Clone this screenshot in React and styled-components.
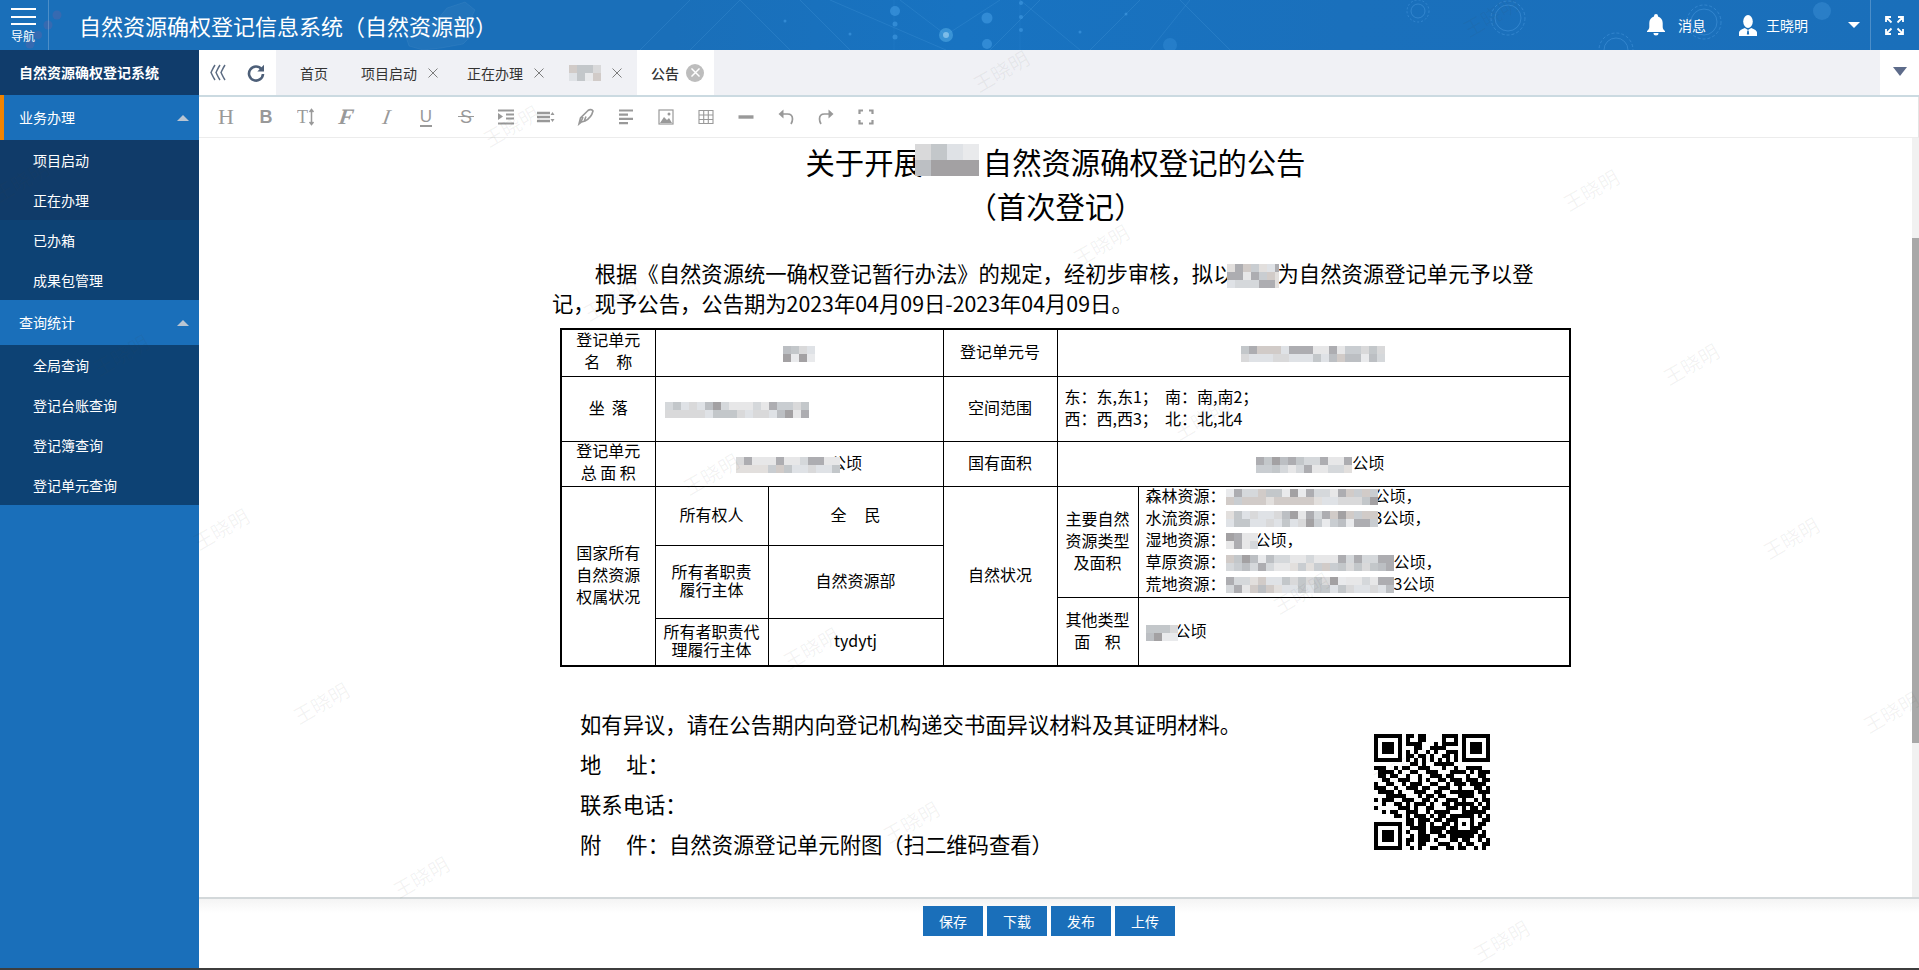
import React from "react";
import styled, { createGlobalStyle } from "styled-components";

const FONT = `"Noto Sans CJK SC", "Noto Sans", sans-serif`;

const Global = createGlobalStyle`
  html, body { margin: 0; padding: 0; background: #fff; }
  body { font-family: ${FONT}; overflow: hidden; }
  * { box-sizing: border-box; }
`;

const Shell = styled.div`
  position: relative;
  width: 1919px;
  height: 970px;
  display: flex;
  flex-direction: column;
  overflow: hidden;
  border-bottom: 2px solid #3d3d3d;
`;

/* ---------- header ---------- */
const Header = styled.header`
  position: relative;
  flex: 0 0 50px;
  display: flex;
  align-items: center;
  color: #fff;
  background: linear-gradient(90deg, #1a6fb9 0%, #1a6fb9 35%, #1873c1 50%, #1a70bc 70%, #1a6fba 100%);
  overflow: hidden;
`;
const HeaderArt = styled.svg`
  position: absolute;
  left: 0;
  top: 0;
`;
const NavButton = styled.div`
  position: relative;
  flex: 0 0 49px;
  height: 50px;
  padding: 8px 0 0 11px;
  border-right: 1px solid rgba(255, 255, 255, 0.22);
`;
const NavBars = styled.div`
  width: 25px;
  height: 17px;
  border-top: 2px solid #fff;
  border-bottom: 2px solid #fff;
  display: flex;
  align-items: center;
  &::before { content: ""; display: block; width: 100%; height: 2px; background: #fff; }
`;
const NavLabel = styled.div`
  font-size: 12px;
  line-height: 14px;
  margin-top: 4px;
  white-space: nowrap;
`;
const AppTitle = styled.h1`
  position: relative;
  margin: 0 0 0 30px;
  font-size: 22px;
  font-weight: 400;
  line-height: 50px;
  white-space: nowrap;
`;
const HeaderRight = styled.div`
  position: relative;
  margin-left: auto;
  height: 50px;
  display: flex;
  align-items: center;
  font-size: 14px;
`;
const HeaderLabel = styled.span`
  margin-left: ${(p) => p.$ml}px;
  margin-right: ${(p) => p.$mr}px;
  white-space: nowrap;
`;
const Caret = styled.span`
  width: 0;
  height: 0;
  border-left: 6px solid transparent;
  border-right: 6px solid transparent;
  border-top: 6px solid #fff;
  margin-left: 40px;
`;
const ExpandBox = styled.div`
  width: 49px;
  height: 50px;
  margin-left: 10px;
  border-left: 1px solid rgba(255, 255, 255, 0.22);
  display: flex;
  align-items: center;
  justify-content: center;
  padding-right: 2px;
`;

/* ---------- body ---------- */
const Body = styled.div`
  flex: 1;
  display: flex;
  min-height: 0;
`;
const Sidebar = styled.aside`
  flex: 0 0 199px;
  background: #1a6fba;
  color: #fff;
  font-size: 14px;
`;
const SideTitle = styled.div`
  height: 45px;
  line-height: 45px;
  padding-left: 19px;
  background: #103c6b;
  font-weight: 700;
  white-space: nowrap;
`;
const SideGroup = styled.div`
  position: relative;
  height: 45px;
  line-height: 45px;
  padding-left: ${(p) => (p.$active ? 15 : 19)}px;
  border-left: ${(p) => (p.$active ? "4px solid #f08300" : "none")};
  display: flex;
  align-items: center;
`;
const GroupArrow = styled.span`
  width: 0;
  height: 0;
  margin-left: auto;
  margin-right: 10px;
  border-left: 6px solid transparent;
  border-right: 6px solid transparent;
  border-bottom: 6px solid #b9c5d2;
`;
const SideItem = styled.div`
  height: 40px;
  line-height: 40px;
  padding-left: 33px;
  background: ${(p) => (p.$dark ? "#103b69" : "#0d4274")};
`;

const Main = styled.main`
  flex: 1;
  min-width: 0;
  display: flex;
  flex-direction: column;
`;

/* ---------- tabs ---------- */
const TabBar = styled.div`
  flex: 0 0 47px;
  height: 47px;
  display: flex;
  background: #f0f1f5;
  border-bottom: 2px solid #cbdae1;
  font-size: 14px;
  color: #333;
`;
const TabTools = styled.div`
  flex: 0 0 77px;
  background: #fff;
  display: flex;
  align-items: center;
  padding-left: 11px;
  gap: 20px;
`;
const Tab = styled.div`
  display: flex;
  align-items: center;
  gap: ${(p) => p.$gap ?? 11}px;
  padding: 0 ${(p) => p.$pr ?? 5}px 0 ${(p) => p.$pl ?? 24}px;
  background: ${(p) => (p.$active ? "#fff" : "transparent")};
  font-weight: ${(p) => (p.$active ? 500 : 400)};
  white-space: nowrap;
`;
const TabMenu = styled.div`
  flex: 0 0 39px;
  margin-left: auto;
  background: #fff;
  display: flex;
  align-items: center;
  justify-content: center;
  &::before {
    content: "";
    border-left: 7.5px solid transparent;
    border-right: 7.5px solid transparent;
    border-top: 9px solid #5d6b8a;
    margin-top: -2px;
  }
`;
const CloseCircle = styled.span`
  width: 18px;
  height: 18px;
  border-radius: 50%;
  background: #bdbdbd;
  display: flex;
  align-items: center;
  justify-content: center;
`;

/* ---------- toolbar ---------- */
const Toolbar = styled.div`
  flex: 0 0 41px;
  display: flex;
  padding-left: 7px;
  background: #fff;
  border-bottom: 1px solid #ececec;
  border-right: 1px solid #e4e4e4;
`;
const ToolButton = styled.div`
  width: 40px;
  height: 40px;
  display: flex;
  align-items: center;
  justify-content: center;
  color: #999;
`;
const ToolGlyph = styled.span`
  position: relative;
  display: inline-block;
  font-family: ${(p) => (p.$serif ? `"Liberation Serif", serif` : `"Liberation Sans", sans-serif`)};
  font-size: ${(p) => p.$size ?? 18}px;
  font-weight: ${(p) => (p.$bold ? 700 : 400)};
  font-style: ${(p) => (p.$italic ? "italic" : "normal")};
  line-height: 20px;
  color: #999;
  transform: ${(p) => (p.$skew ? `skewX(-${p.$skew}deg)` : "none")};
  &::after {
    content: "";
    display: ${(p) => (p.$bar ? "block" : "none")};
    position: absolute;
    left: ${(p) => (p.$bar === "strike" ? -2 : 0)}px;
    right: ${(p) => (p.$bar === "strike" ? -2 : 0)}px;
    top: ${(p) => (p.$bar === "strike" ? 9 : 18)}px;
    height: ${(p) => (p.$bar === "strike" ? 1 : 2)}px;
    background: #999;
  }
`;

/* ---------- document ---------- */
const DocRow = styled.div`
  flex: 1;
  min-height: 0;
  display: flex;
`;
const Doc = styled.div`
  flex: 1;
  min-width: 0;
  padding-top: 1px;
  color: #000;
  background: #fff;
`;
const DocTitle = styled.h2`
  margin: 0;
  font-size: 29.33px;
  line-height: 44px;
  font-weight: 400;
  text-align: center;
  white-space: nowrap;
`;
const Paragraph = styled.p`
  margin: 31px 0 0 353px;
  font-size: 21.33px;
  line-height: 29px;
  text-indent: 2em;
  white-space: nowrap;
`;
const SheetTable = styled.table`
  margin: 11px 0 0 361px;
  width: 1009px;
  table-layout: fixed;
  border-collapse: collapse;
  border: 2px solid #000;
  font-size: 16px;
  line-height: 22px;
`;
const SheetCol = styled.col`
  width: ${(p) => p.$w}px;
`;
const SheetRow = styled.tr`
  height: ${(p) => p.$h}px;
`;
const Cell = styled.td`
  border: 1px solid #000;
  padding: 0 0 3px ${(p) => p.$pl ?? 0}px;
  text-align: ${(p) => (p.$left ? "left" : "center")};
  line-height: ${(p) => p.$lh ?? 22}px;
  white-space: nowrap;
  vertical-align: middle;
`;
const TightLines = styled.div`
  margin-top: -3px;
`;
const ResourceList = styled.div`
  margin: -5px 0 -2px;
`;
const Notice = styled.div`
  margin: 37px 0 0 381px;
  display: flex;
`;
const NoticeText = styled.div`
  flex: 0 0 794px;
  font-size: 21.33px;
  line-height: 40px;
  white-space: nowrap;
`;
const NoticeLabelGap = styled.span`
  display: inline-block;
  width: 25px;
`;
const QrImage = styled.svg`
  margin-top: 30px;
  flex: 0 0 116px;
`;
const Track = styled.div`
  flex: 0 0 7px;
  background: #f1f1f1;
  padding-top: 100px;
`;
const Thumb = styled.div`
  height: 505px;
  background: #a8a8a8;
`;
const Footer = styled.footer`
  flex: 0 0 71px;
  display: flex;
  justify-content: center;
  gap: 4px;
  padding: 7px 20px 0 0;
  border-top: 2px solid #d3d8da;
  background: linear-gradient(#f4f4f4 0, #fff 14px);
`;
const ActionButton = styled.button`
  width: 60px;
  height: 30px;
  padding: 0;
  border: 0;
  background: #1a6fba;
  color: #fff;
  font-family: ${FONT};
  font-size: 14px;
  line-height: 30px;
`;

/* ---------- watermark ---------- */
const WatermarkLayer = styled.div`
  position: absolute;
  inset: 0;
  pointer-events: none;
  overflow: hidden;
  z-index: 5;
`;
const Watermark = styled.span`
  position: absolute;
  font-size: 20px;
  line-height: 20px;
  color: rgba(70, 70, 70, 0.065);
  white-space: nowrap;
  transform: translate(-50%, -50%) rotate(-30deg);
`;

/* ---------- mosaic ---------- */
const MosaicSvg = styled.svg`
  position: relative;
  z-index: 1;
  top: ${(p) => p.$dy ?? 0}px;
  display: inline-block;
  vertical-align: middle;
  margin-left: ${(p) => p.$ml ?? 0}px;
  margin-right: ${(p) => p.$mr ?? 0}px;
`;
const PALETTE = ["#d9d9da", "#c9cdd1", "#e7e7e8", "#bcbfc3", "#dfe2e6", "#d1cbc8", "#adadb1", "#e9eaec", "#c3c7ca", "#e2dfdd", "#d5d8db", "#a3a1a3"];
function Mosaic({ w, h = 16, tile = 8, seed = 1, ml, mr, dy }) {
  const rects = [];
  let s = seed * 7919 + 13;
  for (let y = 0; y < h; y += tile) {
    for (let x = 0; x < w; x += tile) {
      s = (s * 1103515245 + 12345) & 0x7fffffff;
      rects.push(<rect key={`${x}-${y}`} x={x} y={y} width={tile} height={tile} fill={PALETTE[(s >> 8) % PALETTE.length]} />);
    }
  }
  return (
    <MosaicSvg width={w} height={h} viewBox={`0 0 ${w} ${h}`} shapeRendering="crispEdges" $ml={ml} $mr={mr} $dy={dy} aria-hidden="true">
      {rects}
    </MosaicSvg>
  );
}

/* ---------- QR ---------- */
const QR_TOP = [
  "011011000011110", "010011000010010", "011110001011110", "000110011110000",
  "010100101001110", "011011010011010", "010101010101010", "001101001111100",
];
const QR_MID = [
  "11100101100111000100100111100", "01111010011001110001111010111", "01101100100100111011000100110",
  "00110011100101001101110111011", "10011001011100110010111011110", "11100100111011001110010001101",
  "01111010001110011001111110111", "00011111000101101100011110010", "10111001110011010011101001011",
  "00100110101110100110111110101", "10000011101001100011101011011", "00101100111001011110001111110",
  "00000110101110101101111000101",
];
const QR_LOW = [
  "110111011011111110011", "110110100110100010110", "011110111101101011100", "100110111011100011010",
  "010111001101111110110", "110111010001101100101", "100110001110010110011", "010100110011011001010",
];
function qrModule(r, c) {
  const finder = (a, b) => {
    if (a < 0 || b < 0 || a > 7 || b > 7) return null;
    if (a === 7 || b === 7) return 0;
    if (a === 0 || a === 6 || b === 0 || b === 6) return 1;
    if (a === 1 || a === 5 || b === 1 || b === 5) return 0;
    return 1;
  };
  const f = finder(r, c) ?? finder(r, 28 - c) ?? finder(28 - r, c);
  if (f !== null && f !== undefined) return f;
  if (r >= 20 && r <= 24 && c >= 20 && c <= 24) {
    const d = Math.max(Math.abs(r - 22), Math.abs(c - 22));
    return d === 1 ? 0 : 1;
  }
  if (r <= 7) return +QR_TOP[r][c - 7];
  if (r <= 20) return +QR_MID[r - 8][c];
  return +QR_LOW[r - 21][c - 8];
}
function QrCode() {
  const cells = [];
  for (let r = 0; r < 29; r++) for (let c = 0; c < 29; c++) {
    if (qrModule(r, c)) cells.push(<rect key={`${r}-${c}`} x={c * 4} y={r * 4} width="4" height="4" fill="#000" />);
  }
  return <QrImage width="116" height="116" viewBox="0 0 116 116" shapeRendering="crispEdges" aria-label="二维码">{cells}</QrImage>;
}

/* ---------- icons ---------- */
const Cross = ({ color = "#7d7d7d", size = 10, w = 1 }) => (
  <svg width={size} height={size} viewBox="0 0 10 10"><path d="M.5.5l9 9M9.5.5l-9 9" stroke={color} strokeWidth={w} fill="none" /></svg>
);
const Svg18 = ({ children }) => <svg width="18" height="18" viewBox="0 0 18 18" fill="none">{children}</svg>;
const G = "#999";

const HeaderDecor = () => (
  <HeaderArt width="1919" height="50" viewBox="0 0 1919 50" aria-hidden="true">
    <g fill="#7f5fa0" opacity=".28">
      <circle cx="57" cy="15" r="4.5" /><circle cx="48" cy="25" r="4.5" /><circle cx="38" cy="35" r="4" /><circle cx="30" cy="44" r="4.5" />
    </g>
    <path d="M405 34l18-10 14-4 10-12 18-6 10 8-6 12 8 8-14 14-22 4-18 2-14-4z" fill="rgba(255,255,255,.035)" stroke="rgba(255,255,255,.05)" />
    <g stroke="#5ca8e8" strokeOpacity=".2" fill="none">
      <path d="M640 50L690 0M690 50L740 0M740 0L790 50M800 0L850 50M830 0L946 50M946 35L1000 0M946 35L900 0M990 50L1040 0M1020 0L1080 50M1090 50L1140 0M1150 50L1190 0M1180 0L1230 50" />
      <path d="M894 0v50M1020 0v50" strokeOpacity=".1" />
    </g>
    <g fill="#4aa3ea" opacity=".5">
      <circle cx="895" cy="11" r="5" /><circle cx="895" cy="24" r="2.5" /><circle cx="895" cy="37" r="2.5" /><circle cx="987" cy="18" r="5.5" /><circle cx="987" cy="44" r="5" />
      <circle cx="1021" cy="3" r="2" /><circle cx="1021" cy="17" r="2" /><circle cx="1021" cy="30" r="2" /><circle cx="1170" cy="45" r="7" opacity=".5" />
      <circle cx="850" cy="34" r="1.5" /><circle cx="785" cy="21" r="1.5" /><circle cx="1080" cy="32" r="1.5" /><circle cx="1126" cy="14" r="1.5" />
    </g>
    <circle cx="946" cy="35" r="7" fill="#6cc4f5" opacity=".4" />
    <circle cx="946" cy="35" r="3" fill="#cdeeff" opacity=".45" />
    <g stroke="#4a9ae0" strokeOpacity=".5" fill="none">
      <circle cx="1418" cy="11" r="7" /><circle cx="1418" cy="11" r="11" strokeDasharray="2 2" />
      <circle cx="1508" cy="18" r="13" /><circle cx="1508" cy="18" r="17" strokeDasharray="3 2" />
      <circle cx="1704" cy="22" r="13" /><circle cx="1704" cy="22" r="17" strokeDasharray="3 2" />
      <circle cx="1616" cy="50" r="12" /><circle cx="1616" cy="50" r="17" strokeDasharray="3 2" />
    </g>
    <circle cx="1822" cy="11" r="9" fill="#4a9ae0" opacity=".35" />
  </HeaderArt>
);

const Bell = () => (
  <svg width="20" height="22" viewBox="0 0 20 22"><path d="M10 0a2 2 0 0 1 2 2v.5c3 .9 4.7 3.4 4.7 6.6v4c0 1.8 1 3 2.3 4v1H1v-1c1.300-1 2.300-2.200 2.300-4v-4C3.300 5.900 5 3.400 8 2.500V2a2 2 0 0 1 2-2zM7.500 19h5a2.500 2.500 0 0 1-5 0z" fill="#fff" /></svg>
);
const UserIcon = () => (
  <svg width="18" height="21" viewBox="0 0 18 21"><ellipse cx="9" cy="6.500" rx="4.800" ry="6.500" fill="#fff" /><path d="M0 21v-3.500c0-2 2.500-3 5.800-4.500L9 15l3.200-2c3.300 1.500 5.800 2.500 5.800 4.500V21z" fill="#fff" /><path d="M8.300 15.500h1.400l.5 4h-2.400z" fill="#1a6fba" /></svg>
);
const ExpandIcon = () => (
  <svg width="19" height="19" viewBox="0 0 19 19" fill="none" stroke="#fff" strokeWidth="1.800">
    <path d="M1 6V1h5M1 1l5.500 5.500M13 1h5v5M18 1l-5.500 5.500M1 13v5h5M1 18l5.500-5.500M18 13v5h-5M18 18l-5.500-5.500" />
  </svg>
);
const RewindIcon = () => (
  <svg width="17" height="17" viewBox="0 0 17 17" fill="none" stroke="#5b6b82" strokeWidth="1.500">
    <path d="M5 1C3 4 2 6.500 1 8.500 2 10.500 3 13 5 16M10 1C8 4 7 6.500 6 8.500 7 10.500 8 13 10 16M15 1c-2 3-3 5.500-4 7.500 1 2 2 4.500 4 7.500" />
  </svg>
);
const RefreshIcon = () => (
  <svg width="18" height="18" viewBox="0 0 18 18" fill="none">
    <path d="M14.500 5.200A7 7 0 1 0 16 10" stroke="#4d5f78" strokeWidth="2.600" />
    <path d="M17 .8v6.700h-6.700z" fill="#4d5f78" />
  </svg>
);

const TOOLS = [
  <ToolGlyph key="h" $serif $size={22}>H</ToolGlyph>,
  <ToolGlyph key="b" $bold $size={18}>B</ToolGlyph>,
  <Svg18 key="t"><text x="0" y="15" fontFamily="Liberation Serif" fontSize="18" fill={G}>T</text><path d="M14.500 2v14M12.500 4l2-2.500 2 2.500M12.500 14l2 2.500 2-2.500" stroke={G} strokeWidth="1.500" /></Svg18>,
  <ToolGlyph key="f" $serif $italic $bold $size={22} $skew={8}>F</ToolGlyph>,
  <ToolGlyph key="i" $serif $italic $size={21} $skew={10}>I</ToolGlyph>,
  <ToolGlyph key="u" $size={17} $bar="under">U</ToolGlyph>,
  <ToolGlyph key="s" $size={18} $bar="strike">S</ToolGlyph>,
  <Svg18 key="in"><path d="M1 2.500h16M9 6.500h8M9 10.500h8M1 15.500h16" stroke={G} strokeWidth="2.200" /><path d="M1 5l5 3.500L1 12z" fill={G} /></Svg18>,
  <Svg18 key="lh"><path d="M0 4h13M0 8h13M0 12h13" stroke={G} strokeWidth="2.600" transform="translate(0 1)" /><path d="M15.500 4l2 3h-4zM15.500 14l2-3h-4z" fill={G} /></Svg18>,
  <Svg18 key="pen"><path d="M2 16l1.500-6L11 2.500c2-1.500 4-1 5 .5-1 4-4 8-8 10l-3.500 1zM6 9l-2 5M9 8.500l-2 5" stroke={G} strokeWidth="1.600" /></Svg18>,
  <Svg18 key="al"><path d="M2 2.500h14M2 6.700h9M2 10.900h14M2 15.200h9" stroke={G} strokeWidth="2.200" /></Svg18>,
  <Svg18 key="img"><rect x="2" y="2" width="14" height="14" stroke={G} strokeWidth="1.200" /><path d="M3 15l4-6 3 3 2-2 3 5z" fill={G} /><circle cx="12" cy="6" r="1.500" fill={G} /></Svg18>,
  <Svg18 key="tb"><path d="M2 2.500h14v13H2zM2 7h14M2 11.500h14M6.700 2.500v13M11.300 2.500v13" stroke={G} strokeWidth="1.100" /></Svg18>,
  <Svg18 key="hr"><path d="M1.500 9h15" stroke={G} strokeWidth="3.400" /></Svg18>,
  <Svg18 key="un"><path d="M4 6h6.500c3 0 5 2 5 5 0 2-.6 3.500-1.500 5" stroke={G} strokeWidth="1.700" /><path d="M6.500 1.500v9L1.500 6z" fill={G} /></Svg18>,
  <Svg18 key="re"><path d="M14 6H7.500c-3 0-5 2-5 5 0 2 .6 3.500 1.500 5" stroke={G} strokeWidth="1.700" /><path d="M11.500 1.500v9l5-4.500z" fill={G} /></Svg18>,
  <Svg18 key="fs"><path d="M2.500 6V2.500H6M12 2.500h3.500V6M15.500 12v3.500H12M6 15.500H2.500V12" stroke={G} strokeWidth="2.200" /></Svg18>,
];

const MENU = [
  { head: "业务办理", active: true, items: [["项目启动", true], ["正在办理", true], ["已办箱", false], ["成果包管理", false]] },
  { head: "查询统计", items: [["全局查询"], ["登记台账查询"], ["登记簿查询"], ["登记单元查询"]] },
];

function marks() {
  const out = [];
  for (let i = -8; i <= 8; i++) {
    for (let j = -4; j <= 4; j++) {
      const x = 1001 + 100 * i + 490 * j;
      const y = 71 + 174 * i - 55 * j;
      if (x > -40 && x < 1960 && y > -20 && y < 990) out.push([x, y]);
    }
  }
  return out;
}

export default function App() {
  return (
    <Shell>
      <Global />
      <Header>
        <HeaderDecor />
        <NavButton>
          <NavBars />
          <NavLabel>导航</NavLabel>
        </NavButton>
        <AppTitle>自然资源确权登记信息系统（自然资源部）</AppTitle>
        <HeaderRight>
          <Bell />
          <HeaderLabel $ml={12} $mr={33}>消息</HeaderLabel>
          <UserIcon />
          <HeaderLabel $ml={9} $mr={0}>王晓明</HeaderLabel>
          <Caret />
          <ExpandBox><ExpandIcon /></ExpandBox>
        </HeaderRight>
      </Header>

      <Body>
        <Sidebar>
          <SideTitle>自然资源确权登记系统</SideTitle>
          {MENU.map((g) => (
            <div key={g.head}>
              <SideGroup $active={g.active}>{g.head}<GroupArrow /></SideGroup>
              {g.items.map(([label, dark]) => <SideItem key={label} $dark={dark}>{label}</SideItem>)}
            </div>
          ))}
        </Sidebar>

        <Main>
          <TabBar>
            <TabTools><RewindIcon /><RefreshIcon /></TabTools>
            <Tab $pr={9}>首页</Tab>
            <Tab>项目启动<Cross /></Tab>
            <Tab>正在办理<Cross /></Tab>
            <Tab $pl={20} $pr={15}><Mosaic w={32} h={16} seed={3} /><Cross /></Tab>
            <Tab $active $pl={14} $pr={10} $gap={7}>公告<CloseCircle><Cross color="#fff" size={9} w={1.6} /></CloseCircle></Tab>
            <TabMenu />
          </TabBar>

          <Toolbar>
            {TOOLS.map((t, i) => <ToolButton key={i}>{t}</ToolButton>)}
          </Toolbar>

          <DocRow>
            <Doc>
              <DocTitle>关于开展<Mosaic w={64} h={32} tile={16} seed={5} ml={-8} mr={4} dy={-6} />自然资源确权登记的公告</DocTitle>
              <DocTitle>（首次登记）</DocTitle>
              <Paragraph>
                根据《自然资源统一确权登记暂行办法》的规定，经初步审核，拟以<Mosaic w={52} h={24} seed={8} ml={-8} mr={-1} />为自然资源登记单元予以登<br />
                记，现予公告，公告期为2023年04月09日-2023年04月09日。
              </Paragraph>

              <SheetTable>
                <colgroup>
                  <SheetCol $w={94} /><SheetCol $w={113} /><SheetCol $w={175} /><SheetCol $w={114} /><SheetCol $w={81} /><SheetCol $w={432} />
                </colgroup>
                <tbody>
                  <SheetRow $h={47}>
                    <Cell><TightLines>登记单元<br />名　称</TightLines></Cell>
                    <Cell colSpan={2}><Mosaic w={32} seed={11} /></Cell>
                    <Cell>登记单元号</Cell>
                    <Cell colSpan={2}><Mosaic w={144} seed={12} /></Cell>
                  </SheetRow>
                  <SheetRow $h={65}>
                    <Cell>坐&nbsp;&nbsp;落</Cell>
                    <Cell colSpan={2} $left $pl={9}><Mosaic w={144} seed={13} /></Cell>
                    <Cell>空间范围</Cell>
                    <Cell colSpan={2} $left $pl={7}>东：东,东1； &nbsp;南：南,南2；<br />西：西,西3； &nbsp;北：北,北4</Cell>
                  </SheetRow>
                  <SheetRow $h={45}>
                    <Cell><TightLines>登记单元<br />总 面 积</TightLines></Cell>
                    <Cell colSpan={2}><Mosaic w={104} seed={14} mr={-10} />公顷</Cell>
                    <Cell>国有面积</Cell>
                    <Cell colSpan={2} $pl={14}><Mosaic w={96} seed={15} />公顷</Cell>
                  </SheetRow>
                  <SheetRow $h={59}>
                    <Cell rowSpan={4}>国家所有<br />自然资源<br />权属状况</Cell>
                    <Cell>所有权人</Cell>
                    <Cell>全&nbsp;&nbsp;&nbsp;&nbsp;&nbsp;民</Cell>
                    <Cell rowSpan={4}>自然状况</Cell>
                    <Cell rowSpan={2}>主要自然<br />资源类型<br />及面积</Cell>
                    <Cell rowSpan={2} $left $pl={7}>
                      <ResourceList>
                        森林资源：<Mosaic w={152} seed={16} mr={-4} />公顷，<br />
                        水流资源：<Mosaic w={152} seed={17} mr={-4} />3公顷，<br />
                        湿地资源：<Mosaic w={32} seed={18} mr={-3} />公顷，<br />
                        草原资源：<Mosaic w={168} seed={19} />公顷，<br />
                        荒地资源：<Mosaic w={168} seed={20} />3公顷
                      </ResourceList>
                    </Cell>
                  </SheetRow>
                  <SheetRow $h={52}>
                    <Cell rowSpan={2} $lh={18}>所有者职责<br />履行主体</Cell>
                    <Cell rowSpan={2}>自然资源部</Cell>
                  </SheetRow>
                  <SheetRow $h={21}>
                    <Cell rowSpan={2}>其他类型<br />面&nbsp;&nbsp;&nbsp;&nbsp;积</Cell>
                    <Cell rowSpan={2} $left $pl={7}><Mosaic w={32} seed={21} mr={-3} />公顷</Cell>
                  </SheetRow>
                  <SheetRow $h={48}>
                    <Cell $lh={18}>所有者职责代<br />理履行主体</Cell>
                    <Cell>tydytj</Cell>
                  </SheetRow>
                </tbody>
              </SheetTable>

              <Notice>
                <NoticeText>
                  <div>如有异议，请在公告期内向登记机构递交书面异议材料及其证明材料。</div>
                  <div>地<NoticeLabelGap />址：</div>
                  <div>联系电话：</div>
                  <div>附<NoticeLabelGap />件：自然资源登记单元附图（扫二维码查看）</div>
                </NoticeText>
                <QrCode />
              </Notice>
            </Doc>
            <Track><Thumb /></Track>
          </DocRow>

          <Footer>
            <ActionButton>保存</ActionButton>
            <ActionButton>下载</ActionButton>
            <ActionButton>发布</ActionButton>
            <ActionButton>上传</ActionButton>
          </Footer>
        </Main>
      </Body>

      <WatermarkLayer>
        {marks().map(([x, y]) => <Watermark key={`${x}-${y}`} style={{ left: x, top: y }}>王晓明</Watermark>)}
      </WatermarkLayer>
    </Shell>
  );
}
